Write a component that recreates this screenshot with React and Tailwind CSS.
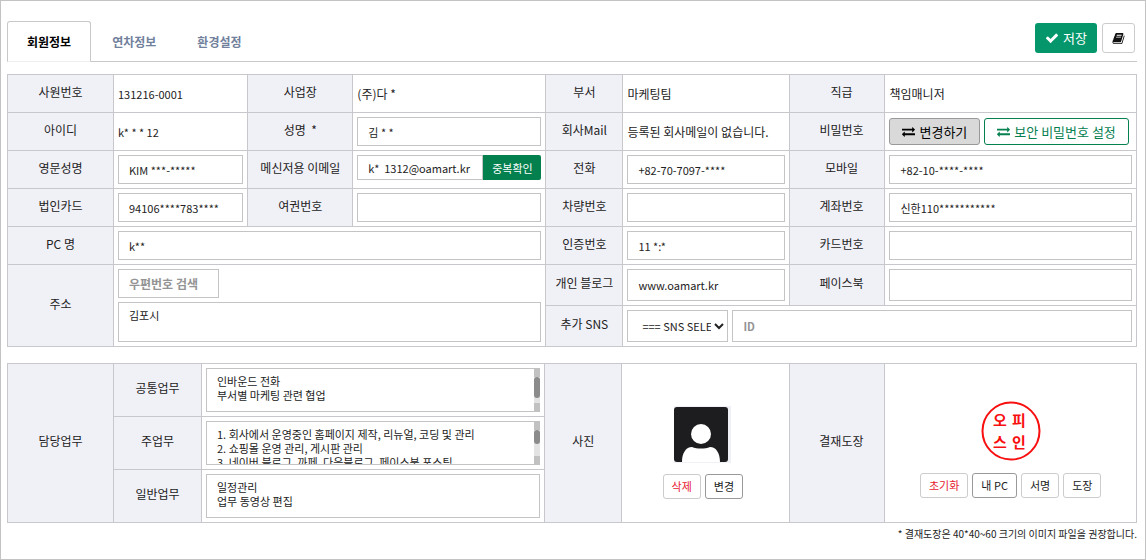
import React, { useState } from 'react';

const TABS = ['회원정보', '연차정보', '환경설정'];

const FIELD = 'block border border-[#c4c4c4] bg-white px-2.5 text-[11px] text-[#222] outline-none';
const SMALL_BUTTON = 'h-[25px] rounded-[3px] border px-2 text-[11px] leading-none whitespace-nowrap bg-white';

const CheckIcon = () => (
  <svg width="14" height="14" viewBox="0 0 1792 1792" fill="currentColor" aria-hidden="true">
    <path d="M1671 566q0 40-28 68l-724 724-136 136q-28 28-68 28t-68-28l-136-136-362-362q-28-28-28-68t28-68l136-136q28-28 68-28t68 28l294 295 656-657q28-28 68-28t68 28l136 136q28 28 28 68z" />
  </svg>
);

const ExchangeIcon = () => (
  <svg width="13" height="13" viewBox="0 0 1792 1792" fill="currentColor" aria-hidden="true">
    <path d="M1792 1184v192q0 13-9.5 22.5t-22.5 9.5h-1376v192q0 13-9.5 22.5t-22.5 9.5q-12 0-24-10l-319-320q-9-9-9-22 0-14 9-23l320-320q9-9 23-9 13 0 22.5 9.5t9.5 22.5v192h1376q13 0 22.5 9.5t9.5 22.5zm0-544q0 14-9 23l-320 320q-9 9-23 9-13 0-22.5-9.5t-9.5-22.5v-192h-1376q-13 0-22.5-9.5t-9.5-22.5v-192q0-13 9.5-22.5t22.5-9.5h1376v-192q0-14 9-23t23-9q12 0 24 10l319 319q9 9 9 23z" />
  </svg>
);

const BookIcon = () => (
  <svg width="13" height="13" viewBox="0 0 1792 1792" fill="currentColor" aria-hidden="true">
    <path d="M1703 478q40 57 18 129l-275 906q-19 64-76.5 107.5t-122.5 43.5h-923q-77 0-148.5-53.5t-99.5-131.5q-24-67-2-127 0-4 3-27t4-37q1-8-3-21.5t-3-19.5q2-11 8-21t16.5-23.5 16.5-23.5q23-38 45-91.5t30-91.5q3-10 .5-30t-.5-28q3-11 17-28t17-23q21-36 42-92t25-90q1-9-2.5-32t.5-28q4-13 22-30.5t22-22.5q19-26 42.5-84.5t27.5-96.5q1-8-3-25.5t-2-26.5q2-8 9-18t18-23 17-21q8-12 16.5-30.5t15-35 16-36 19.5-32 26.5-23.5 36-11.5 47.5 5.5l-1 3q38-9 51-9h761q74 0 114 56t18 130l-274 906q-36 119-71.5 153.5t-128.5 34.5h-869q-27 0-38 15-11 16-1 43 24 70 144 70h923q29 0 56-15.5t35-41.5l300-987q7-22 5-57 38 15 59 43zm-1064 2q-4 13 2 22.5t20 9.5h608q13 0 25.5-9.5t16.5-22.5l21-64q4-13-2-22.5t-20-9.5h-608q-13 0-25.5 9.5t-16.5 22.5zm-83 256q-4 13 2 22.5t20 9.5h608q13 0 25.5-9.5t16.5-22.5l21-64q4-13-2-22.5t-20-9.5h-608q-13 0-25.5 9.5t-16.5 22.5z" />
  </svg>
);

const Avatar = () => (
  <svg width="57" height="57" viewBox="0 0 57 57" role="img" aria-label="사진">
    <rect width="57" height="57" fill="#f0f0f7" />
    <rect y="1" width="54" height="55" rx="3" fill="#1d1d1f" />
    <circle cx="27" cy="28" r="10" fill="#fff" />
    <path d="M8 56C8 47 12 41 18 41C23 43 31 43 36 41C42 41 46 47 46 56Z" fill="#fff" />
  </svg>
);

const Stamp = () => (
  <svg width="60" height="60" viewBox="0 0 60 60" role="img" aria-label="결재도장" className="text-[15px] font-bold">
    <circle cx="30" cy="30" r="28.5" fill="none" stroke="#f80f0f" strokeWidth="2" />
    <text x="12 31" y="25" fill="#f80f0f">오피</text>
    <text x="12 31" y="47" fill="#f80f0f">스인</text>
  </svg>
);

const Label = ({ htmlFor, shifted = false, children, ...rest }) => (
  <th
    scope="row"
    className={`border border-[#c8c8cc] bg-[#f0f0f7] pb-1 text-center font-normal ${shifted ? 'pl-2' : ''}`}
    {...rest}
  >
    <label htmlFor={htmlFor}>{children}</label>
  </th>
);

const Cell = ({ children, ...rest }) => (
  <td className="border border-[#c8c8cc] p-1" {...rest}>
    {children}
  </td>
);

const TextField = ({ id, value = '', tall = false }) => (
  <input id={id} type="text" defaultValue={value} className={`${FIELD} w-full ${tall ? 'h-8' : 'h-[29px]'}`} />
);

// thumb: height class of the scrollbar thumb, left out when everything fits
const TaskArea = ({ id, value, thumb }) => (
  <div className="relative">
    <textarea
      id={id}
      defaultValue={value}
      className={`${FIELD} h-11 w-full resize-none overflow-y-auto py-[5px] leading-[14px] [scrollbar-width:none]`}
    />
    {thumb && (
      <div aria-hidden="true" className="pointer-events-none absolute inset-y-0 right-0 flex w-1.5 flex-col bg-[#e3e3e3]">
        <span className="h-[9px] bg-[#c1c1c1]" />
        <span className={`rounded-full bg-[#8b8b8b] ${thumb}`} />
        <span className="mt-auto h-[9px] bg-[#c1c1c1]" />
      </div>
    )}
  </div>
);

const App = () => {
  const [activeTab, setActiveTab] = useState(TABS[0]);

  return (
    <main className="min-h-screen border border-[#c3c3c3] bg-white pt-5 pr-2 pl-1.5 font-['Noto_Sans_CJK_KR',sans-serif] text-[12px] leading-4 text-[#222]">
      <header className="flex items-start justify-between border-b border-[#c8c8c8]">
        <nav className="-mb-px flex gap-px" role="tablist">
          {TABS.map((tab) => (
            <button
              key={tab}
              type="button"
              role="tab"
              aria-selected={tab === activeTab}
              onClick={() => setActiveTab(tab)}
              className={
                tab === activeTab
                  ? 'h-[41px] rounded-t-[3px] border border-[#c8c8c8] border-b-[#eee] bg-white px-[19px] font-bold text-black'
                  : 'h-[41px] border border-transparent px-[19px] font-bold text-[#71819c]'
              }
            >
              {tab}
            </button>
          ))}
        </nav>
        <div className="flex gap-[5px] pt-0.5 pr-0.5">
          <button type="button" className="flex h-[30px] items-center gap-1 rounded-[3px] bg-[#05976b] px-2.5 text-[13px] text-white">
            <CheckIcon />
            저장
          </button>
          <button type="button" aria-label="도움말" className="flex h-[30px] w-[33px] items-center justify-center rounded-[3px] border border-[#ccc] bg-white text-[#111]">
            <BookIcon />
          </button>
        </div>
      </header>

      <table className="mt-3 w-full table-fixed border-collapse">
        <colgroup>
          <col className="w-[106px]" />
          <col className="w-[11.9%]" />
          <col className="w-[105px]" />
          <col className="w-[17.1%]" />
          <col className="w-[77px]" />
          <col className="w-[14.8%]" />
          <col className="w-[95px]" />
          <col />
        </colgroup>
        <tbody>
          <tr className="h-[38px]">
            <Label>사원번호</Label>
            <Cell><span className="text-[11px]">131216-0001</span></Cell>
            <Label>사업장</Label>
            <Cell>(주)다 *</Cell>
            <Label>부서</Label>
            <Cell>마케팅팀</Cell>
            <Label shifted>직급</Label>
            <Cell>책임매니저</Cell>
          </tr>
          <tr className="h-[38px]">
            <Label>아이디</Label>
            <Cell><span className="text-[11px]">k* * * 12</span></Cell>
            <Label htmlFor="name">성명 &nbsp;*</Label>
            <Cell><TextField id="name" value="김 * *" /></Cell>
            <Label>회사Mail</Label>
            <Cell>등록된 회사메일이 없습니다.</Cell>
            <Label shifted>비밀번호</Label>
            <Cell>
              <div className="flex gap-1 text-[13px] whitespace-nowrap">
                <button type="button" className="flex h-[27px] items-center gap-1 rounded-[3px] border border-[#999] bg-[#d9d9d9] px-3 text-black">
                  <ExchangeIcon />
                  변경하기
                </button>
                <button type="button" className="flex h-[27px] items-center gap-1 rounded-[3px] border border-[#05804f] bg-white px-3 text-[#05804f]">
                  <ExchangeIcon />
                  보안 비밀번호 설정
                </button>
              </div>
            </Cell>
          </tr>
          <tr className="h-[38px]">
            <Label htmlFor="nameEn">영문성명</Label>
            <Cell><TextField id="nameEn" value="KIM ***-*****" /></Cell>
            <Label htmlFor="email">메신저용 이메일</Label>
            <Cell>
              <div className="flex h-[29px] items-start">
                <input id="email" type="text" defaultValue="k*  1312@oamart.kr" className={`${FIELD} h-[25px] min-w-0 flex-1`} />
                <button type="button" className="h-[25px] w-[58px] shrink-0 rounded-r-[2px] bg-[#03804d] text-[11px] text-white">
                  중복확인
                </button>
              </div>
            </Cell>
            <Label htmlFor="phone">전화</Label>
            <Cell><TextField id="phone" value="+82-70-7097-****" /></Cell>
            <Label shifted htmlFor="mobile">모바일</Label>
            <Cell><TextField id="mobile" value="+82-10-****-****" /></Cell>
          </tr>
          <tr className="h-[38px]">
            <Label htmlFor="corpCard">법인카드</Label>
            <Cell><TextField id="corpCard" value="94106****783****" /></Cell>
            <Label htmlFor="passport">여권번호</Label>
            <Cell><TextField id="passport" /></Cell>
            <Label htmlFor="carNo">차량번호</Label>
            <Cell><TextField id="carNo" /></Cell>
            <Label shifted htmlFor="account">계좌번호</Label>
            <Cell><TextField id="account" value="신한110***********" /></Cell>
          </tr>
          <tr className="h-[38px]">
            <Label htmlFor="pcName">PC 명</Label>
            <Cell colSpan={3}><TextField id="pcName" value="k**" /></Cell>
            <Label htmlFor="authNo">인증번호</Label>
            <Cell><TextField id="authNo" value="11 *:*" /></Cell>
            <Label shifted htmlFor="cardNo">카드번호</Label>
            <Cell><TextField id="cardNo" /></Cell>
          </tr>
          <tr className="h-[41px]">
            <Label htmlFor="address" rowSpan={2}>주소</Label>
            <Cell colSpan={3} rowSpan={2}>
              <div className="flex flex-col gap-1">
                <input
                  type="text"
                  aria-label="우편번호"
                  placeholder="우편번호 검색"
                  className="block h-[29px] w-[101px] border border-[#c4c4c4] bg-white px-2.5 text-[12px] font-bold outline-none placeholder:text-[#949494]"
                />
                <textarea id="address" defaultValue="김포시" className={`${FIELD} h-10 w-full resize-none py-[5px] leading-[14px]`} />
              </div>
            </Cell>
            <Label htmlFor="blog">개인 블로그</Label>
            <Cell><TextField id="blog" value="www.oamart.kr" tall /></Cell>
            <Label shifted htmlFor="facebook">페이스북</Label>
            <Cell><TextField id="facebook" tall /></Cell>
          </tr>
          <tr className="h-[41px]">
            <Label htmlFor="sns">추가 SNS</Label>
            <Cell colSpan={3}>
              <div className="flex gap-1">
                <select id="sns" className="h-8 w-[101px] shrink-0 border border-[#c4c4c4] bg-white pl-2.5 text-[11px] text-[#222]">
                  <option>=== SNS SELECT ===</option>
                </select>
                <input
                  type="text"
                  aria-label="SNS ID"
                  placeholder="ID"
                  className={`${FIELD} h-8 min-w-0 flex-1 font-bold placeholder:text-[#949494]`}
                />
              </div>
            </Cell>
          </tr>
        </tbody>
      </table>

      <table className="mt-4 w-full table-fixed border-collapse">
        <colgroup>
          <col className="w-[106px]" />
          <col className="w-[88px]" />
          <col className="w-[30.4%]" />
          <col className="w-[77px]" />
          <col className="w-[14.9%]" />
          <col className="w-[95px]" />
          <col />
        </colgroup>
        <tbody>
          <tr>
            <Label rowSpan={3}>담당업무</Label>
            <Label htmlFor="commonTask">공통업무</Label>
            <Cell><TaskArea id="commonTask" value={'인바운드 전화\n부서별 마케팅 관련 협업\n'} thumb="h-[21px]" /></Cell>
            <Label rowSpan={3}>사진</Label>
            <Cell rowSpan={3}>
              <div className="flex flex-col items-center gap-[11px] pt-[18px] pr-1.5">
                <Avatar />
                <div className="flex gap-1">
                  <button type="button" className={`${SMALL_BUTTON} border-[#ccc] text-[#e8202f]`}>삭제</button>
                  <button type="button" className={`${SMALL_BUTTON} border-[#999]`}>변경</button>
                </div>
              </div>
            </Cell>
            <Label shifted rowSpan={3}>결재도장</Label>
            <Cell rowSpan={3}>
              <div className="flex flex-col items-center gap-3 pt-[13px]">
                <Stamp />
                <div className="flex gap-1">
                  <button type="button" className={`${SMALL_BUTTON} border-[#ccc] text-[#e8202f]`}>초기화</button>
                  <button type="button" className={`${SMALL_BUTTON} border-[#999]`}>내 PC</button>
                  <button type="button" className={`${SMALL_BUTTON} border-[#ccc]`}>서명</button>
                  <button type="button" className={`${SMALL_BUTTON} border-[#ccc]`}>도장</button>
                </div>
              </div>
            </Cell>
          </tr>
          <tr>
            <Label htmlFor="mainTask">주업무</Label>
            <Cell>
              <TaskArea
                id="mainTask"
                value={'1. 회사에서 운영중인 홈페이지 제작, 리뉴얼, 코딩 및 관리\n2. 쇼핑몰 운영 관리, 게시판 관리\n3. 네이버 블로그, 까페, 다음블로그, 페이스북 포스팅\n\n'}
                thumb="h-[14px]"
              />
            </Cell>
          </tr>
          <tr>
            <Label htmlFor="generalTask">일반업무</Label>
            <Cell><TaskArea id="generalTask" value={'일정관리\n업무 동영상 편집'} /></Cell>
          </tr>
        </tbody>
      </table>
      <p className="mt-1 text-right text-[10px] leading-[14px]">* 결재도장은 40*40~60 크기의 이미지 파일을 권장합니다.</p>
    </main>
  );
};

export default App;
